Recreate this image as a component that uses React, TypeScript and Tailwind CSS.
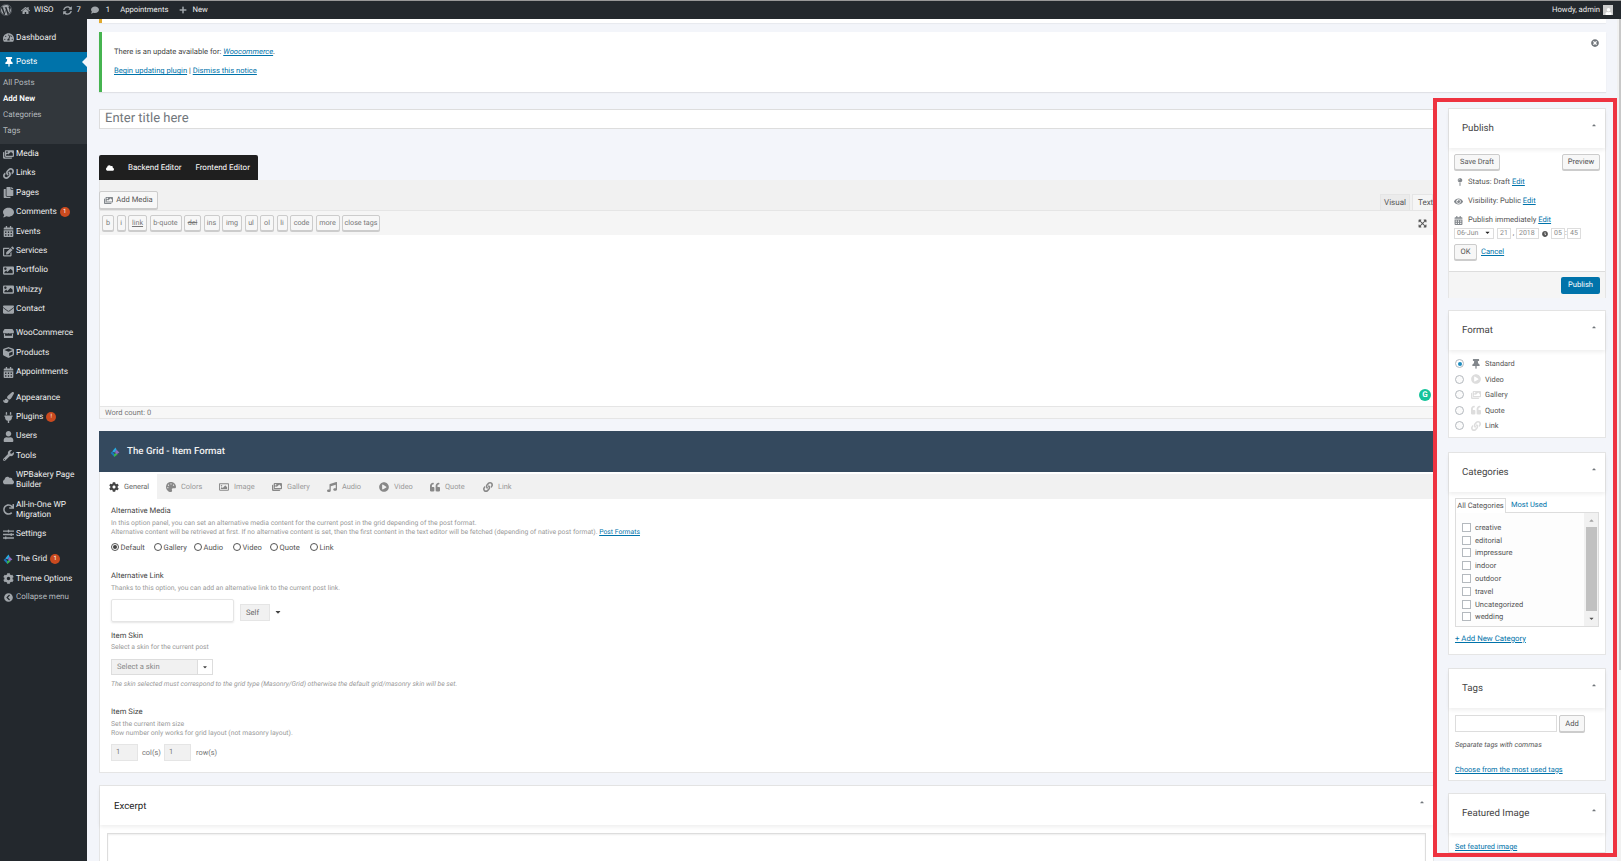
import React from 'react';
import {
  FaWordpress, FaHome, FaSyncAlt, FaComment, FaPlus, FaTachometerAlt, FaThumbtack, FaImages, FaLink, FaCopy,
  FaCalendarAlt, FaEdit, FaImage, FaEnvelope, FaCube, FaPaintBrush, FaPlug, FaUser, FaWrench, FaCloud, FaCog,
  FaRedo, FaSlidersH, FaPalette, FaMusic, FaQuoteLeft, FaPlayCircle, FaEye, FaMapPin, FaTimesCircle, FaClock, FaCaretDown,
  FaCaretUp, FaExpandArrowsAlt, FaRegImage, FaChevronCircleLeft, FaStore,
} from 'react-icons/fa';
import type { IconType } from 'react-icons';

const font = "font-['Roboto','Liberation_Sans',sans-serif] [text-rendering:geometricPrecision]";

const GridLogo = ({ className }: { className: string }) => (
  <svg viewBox="0 0 20 20" className={className}>
    <path d="M10 1 L4 8 L8 10 L12 5 Z" fill="#29abe2" />
    <path d="M4 8 L1 11 L8 18 L10 15 Z" fill="#1b75bc" />
    <path d="M8 18 L14 13 L10 11 L7 14 Z" fill="#39b54a" />
    <path d="M12 5 L9 9 L12 13 L17 10 Z" fill="#8e6bbf" />
  </svg>
);

const MenuRow = ({ icon: Icon, label, badge, h = 'h-[19.4px]', two }: { icon: IconType; label: string; badge?: string; h?: string; two?: boolean }) => (
  <div className={`flex items-center pl-[1px] ${h}`}>
    <span className="w-[15px] flex justify-center shrink-0">
      <Icon className="w-[11px] h-[11px] text-[#a0a5aa]" />
    </span>
    <span className={`text-[8.3px] text-[#eeeeee] ${two ? 'leading-[10px] w-[64px]' : 'leading-none'}`}>{label}</span>
    {badge && (
      <span className="ml-[3px] w-[10px] h-[10px] rounded-full bg-[#ca4a1f] text-white text-[6px] leading-[10px] text-center">{badge}</span>
    )}
  </div>
);

const Sidebar = () => (
  <aside className="w-[87px] shrink-0 bg-[#23282d] pt-[9px] h-full">
    <MenuRow icon={FaTachometerAlt} label="Dashboard" />
    <div className="h-[5px]" />
    <div className="relative flex items-center pl-[1px] h-[20px] bg-[#0073aa]">
      <span className="w-[15px] flex justify-center">
        <FaThumbtack className="w-[10px] h-[10px] text-white" />
      </span>
      <span className="text-[8.3px] text-white leading-none">Posts</span>
      <span className="absolute right-0 top-[5px] border-y-[5px] border-y-transparent border-r-[5px] border-r-[#f3f5fa]" />
    </div>
    <div className="bg-[#32373c] h-[72px] pt-[3px] text-[8px] text-[#b4b9be] pl-[3px]">
      <div className="h-[16px] leading-[16px]">All Posts</div>
      <div className="h-[16px] leading-[16px] font-semibold text-white">Add New</div>
      <div className="h-[16px] leading-[16px]">Categories</div>
      <div className="h-[16px] leading-[16px]">Tags</div>
    </div>
    <MenuRow icon={FaImages} label="Media" />
    <MenuRow icon={FaLink} label="Links" />
    <MenuRow icon={FaCopy} label="Pages" />
    <MenuRow icon={FaComment} label="Comments" badge="1" />
    <MenuRow icon={FaCalendarAlt} label="Events" />
    <MenuRow icon={FaEdit} label="Services" />
    <MenuRow icon={FaImage} label="Portfolio" />
    <MenuRow icon={FaImage} label="Whizzy" />
    <MenuRow icon={FaEnvelope} label="Contact" />
    <div className="h-[5px]" />
    <MenuRow icon={FaStore} label="WooCommerce" />
    <MenuRow icon={FaCube} label="Products" />
    <MenuRow icon={FaCalendarAlt} label="Appointments" />
    <div className="h-[6px]" />
    <MenuRow icon={FaPaintBrush} label="Appearance" />
    <MenuRow icon={FaPlug} label="Plugins" badge="!" />
    <MenuRow icon={FaUser} label="Users" />
    <MenuRow icon={FaWrench} label="Tools" />
    <MenuRow icon={FaCloud} label="WPBakery Page Builder" h="h-[29.5px]" two />
    <MenuRow icon={FaRedo} label="All-in-One WP Migration" h="h-[29.5px]" two />
    <MenuRow icon={FaSlidersH} label="Settings" />
    <div className="h-[5px]" />
    <div className="flex items-center pl-[1px] h-[20px]">
      <span className="w-[15px] flex justify-center"><GridLogo className="w-[11px] h-[11px]" /></span>
      <span className="text-[8.3px] text-[#eeeeee] leading-none">The Grid</span>
      <span className="ml-[3px] w-[10px] h-[10px] rounded-full bg-[#ca4a1f] text-white text-[6px] leading-[10px] text-center">1</span>
    </div>
    <MenuRow icon={FaCog} label="Theme Options" />
    <div className="flex items-center pl-[1px] h-[18px]">
      <span className="w-[15px] flex justify-center"><FaChevronCircleLeft className="w-[9px] h-[9px] text-[#a0a5aa]" /></span>
      <span className="text-[8px] text-[#b4b9be] leading-none">Collapse menu</span>
    </div>
  </aside>
);

const TopBar = () => (
  <div className="h-[19px] shrink-0 bg-[#23282d] border-t border-t-[#999999] flex items-center justify-between text-[7.7px] text-[#eeeeee] leading-none">
    <div className="flex items-center">
      <FaWordpress className="w-[12px] h-[12px] text-[#a0a5aa]" />
      <FaHome className="ml-[9px] w-[9px] h-[9px] text-[#a0a5aa]" />
      <span className="ml-[4px] text-[8px]">WISO</span>
      <FaSyncAlt className="ml-[9px] w-[9px] h-[9px] text-[#a0a5aa]" />
      <span className="ml-[5px]">7</span>
      <FaComment className="ml-[10px] w-[8px] h-[8px] text-[#a0a5aa]" />
      <span className="ml-[7px]">1</span>
      <span className="ml-[10px]">Appointments</span>
      <FaPlus className="ml-[11px] w-[8px] h-[8px] text-[#a0a5aa]" />
      <span className="ml-[5px]">New</span>
    </div>
    <div className="flex items-center pr-[8px]">
      <span>Howdy, admin</span>
      <span className="ml-[3px] w-[10px] h-[10px] bg-[#cccccc] flex items-end justify-center">
        <FaUser className="w-[7px] h-[7px] text-white" />
      </span>
    </div>
  </div>
);

const Btn = ({ children, className = '' }: { children: React.ReactNode; className?: string }) => (
  <span className={`inline-flex items-center justify-center whitespace-nowrap border border-[#cccccc] bg-[#f7f7f7] rounded-[2px] text-[#555555] shadow-[0_1px_0_#cccccc] ${className}`}>{children}</span>
);

const quicktags = [
  { t: 'b', w: 'w-[12px]' },
  { t: 'i', w: 'w-[9px]' },
  { t: 'link', w: 'w-[19px]', c: 'underline' },
  { t: 'b-quote', w: 'w-[32px]' },
  { t: 'del', w: 'w-[17px]', c: 'line-through' },
  { t: 'ins', w: 'w-[16px]' },
  { t: 'img', w: 'w-[20px]' },
  { t: 'ul', w: 'w-[13px]' },
  { t: 'ol', w: 'w-[14px]' },
  { t: 'li', w: 'w-[11px]' },
  { t: 'code', w: 'w-[23px]' },
  { t: 'more', w: 'w-[24px]' },
  { t: 'close tags', w: 'w-[38px]' },
];

const Editor = () => (
  <div className="border-x border-b border-[#e5e5e5] bg-white">
    <div className="h-[30px] bg-[#f1f1f1] flex items-end justify-between">
      <Btn className="ml-[-1px] mb-[1px] w-[59px] h-[18px] text-[7.6px]">
        <FaImages className="w-[9px] h-[9px] mr-[3px] text-[#82878c]" />Add Media
      </Btn>
      <div className="flex items-end text-[8px] text-[#555555]">
        <span className="w-[30px] h-[16px] bg-[#ebebeb] border border-[#e5e5e5] border-b-0 flex items-center justify-center mr-[2px]">Visual</span>
        <span className="w-[21px] h-[16px] bg-[#f5f5f5] border border-[#e5e5e5] border-b-0 flex items-center pl-[5px]">Text</span>
      </div>
    </div>
    <div className="h-[25px] bg-[#f5f5f5] border-t border-[#e5e5e5] flex items-center pl-[2px] gap-[2.5px] relative">
      {quicktags.map(q => (
        <Btn key={q.t} className={`h-[16px] text-[7.2px] text-[#777777] ${q.w}`}>
          <span className={q.c}>{q.t}</span>
        </Btn>
      ))}
      <FaExpandArrowsAlt className="absolute right-[6px] top-[8px] w-[9px] h-[9px] text-[#555555]" />
    </div>
    <div className="h-[171px] relative">
      <span className="absolute right-[2px] bottom-[5px] w-[12px] h-[12px] rounded-full bg-[#15c39a] text-white text-[8px] leading-[12px] text-center font-bold">G</span>
    </div>
    <div className="h-[12px] bg-[#f7f7f7] border-t border-[#e5e5e5] pl-[5px] text-[7.5px] leading-[11px] text-[#777777]">Word count: 0</div>
  </div>
);

const gridTabs: { label: string; icon: IconType; w: string; active?: boolean }[] = [
  { label: 'General', icon: FaCog, w: 'w-[57px]', active: true },
  { label: 'Colors', icon: FaPalette, w: 'w-[53px]' },
  { label: 'Image', icon: FaRegImage, w: 'w-[53px]' },
  { label: 'Gallery', icon: FaImages, w: 'w-[55px]' },
  { label: 'Audio', icon: FaMusic, w: 'w-[52px]' },
  { label: 'Video', icon: FaPlayCircle, w: 'w-[51px]' },
  { label: 'Quote', icon: FaQuoteLeft, w: 'w-[53px]' },
  { label: 'Link', icon: FaLink, w: 'w-[40px]' },
];

const RadioDot = ({ on, label, className = '' }: { on?: boolean; label: string; className?: string }) => (
  <span className={`inline-flex items-center text-[7.6px] text-[#555555] ${className}`}>
    <span className="w-[8px] h-[8px] rounded-full border border-[#555555] mr-[1.5px] flex items-center justify-center">
      {on && <span className="w-[4px] h-[4px] rounded-full bg-[#444444]" />}
    </span>
    {label}
  </span>
);

const Field = ({ children, className = '' }: { children: React.ReactNode; className?: string }) => (
  <div className={`text-[7.7px] leading-none text-[#444444] ${className}`}>{children}</div>
);

const Help = ({ children, className = '' }: { children: React.ReactNode; className?: string }) => (
  <div className={`text-[6.8px] leading-[9px] text-[#999999] ${className}`}>{children}</div>
);

const GridBox = () => (
  <div className="mt-[12px] bg-white border-x border-b border-[#e5e5e5] h-[342px]">
    <div className="h-[41px] bg-[#34495e] flex items-center pl-[11px] pt-[1px] mx-[-1px]">
      <GridLogo className="w-[11px] h-[11px]" />
      <span className="ml-[6px] text-[9.7px] font-medium text-[#f1f1f1]">The Grid - Item Format</span>
    </div>
    <div className="h-[25px] mt-[2px] bg-[#f1f1f1] flex text-[7.4px] text-[#999999]">
      {gridTabs.map(t => (
        <div key={t.label} className={`${t.w} flex items-center pl-[9px] ${t.active ? 'bg-white text-[#666666]' : ''}`}>
          <t.icon className={`w-[10px] h-[10px] mr-[5px] ${t.active ? 'text-[#444444]' : 'text-[#888888]'}`} />
          {t.label}
        </div>
      ))}
    </div>
    <div className="pl-[11px]">
      <Field className="pt-[8px]">Alternative Media</Field>
      <Help className="mt-[4px]">
        In this option panel, you can set an alternative media content for the current post in the grid depending of the post format.<br />
        Alternative content will be retrieved at first. If no alternative content is set, then the first content in the text editor will be fetched (depending of native post format). <span className="text-[#0073aa] underline">Post Formats</span>
      </Help>
      <div className="flex mt-[5px] h-[11px]">
        <RadioDot on label="Default" className="w-[43px]" />
        <RadioDot label="Gallery" className="w-[40px]" />
        <RadioDot label="Audio" className="w-[39px]" />
        <RadioDot label="Video" className="w-[37px]" />
        <RadioDot label="Quote" className="w-[40px]" />
        <RadioDot label="Link" />
      </div>
      <Field className="mt-[19px]">Alternative Link</Field>
      <Help className="mt-[5px]">Thanks to this option, you can add an alternative link to the current post link.</Help>
      <div className="flex items-center mt-[6px] h-[23px]">
        <span className="w-[123px] h-[23px] border border-[#e5e5e5] rounded-[2px] shadow-[0_1px_2px_rgba(0,0,0,0.1)]" />
        <span className="ml-[6px] w-[30px] h-[17px] mt-[3px] bg-[#f1f1f1] border border-[#e5e5e5] text-[7.6px] leading-[15px] pl-[5px] text-[#666666]">Self</span>
        <FaCaretDown className="ml-[4px] mt-[3px] w-[8px] h-[8px] text-[#444444]" />
      </div>
      <Field className="mt-[10px]">Item Skin</Field>
      <Help className="mt-[3px]">Select a skin for the current post</Help>
      <div className="flex w-[102px] h-[16px] mt-[7px] border border-[#dddddd] text-[7.6px] leading-[14px] text-[#888888]">
        <span className="flex-1 bg-[#f1f1f1] pl-[5px]">Select a skin</span>
        <span className="w-[15px] bg-white flex items-center justify-center border-l border-[#dddddd]"><FaCaretDown className="w-[6px] h-[6px] text-[#444444]" /></span>
      </div>
      <Help className="mt-[5px] italic">The skin selected must correspond to the grid type (Masonry/Grid) otherwise the default grid/masonry skin will be set.</Help>
      <Field className="mt-[19px]">Item Size</Field>
      <Help className="mt-[4px]">Set the current item size<br />Row number only works for grid layout (not masonry layout).</Help>
      <div className="flex items-center mt-[6px] text-[7.4px] text-[#777777]">
        <span className="w-[27px] h-[17px] bg-[#f1f1f1] border border-[#e5e5e5] pl-[4px] leading-[14px]">1</span>
        <span className="ml-[4px] w-[22px]">col(s)</span>
        <span className="w-[27px] h-[17px] bg-[#f1f1f1] border border-[#e5e5e5] pl-[4px] leading-[14px]">1</span>
        <span className="ml-[5px]">row(s)</span>
      </div>
    </div>
  </div>
);

const Postbox = ({ title, children, className = '' }: { title: string; children: React.ReactNode; className?: string }) => (
  <div className={`bg-white border border-[#e5e5e5] ${className}`}>
    <div className="h-[39px] flex items-center justify-between pl-[13px] pr-[8px] pt-[2px] shadow-[0_2px_4px_rgba(0,0,0,0.07)]">
      <span className="text-[9.7px] text-[#444444]">{title}</span>
      <FaCaretUp className="w-[6px] h-[6px] text-[#72777c] mb-[10px]" />
    </div>
    {children}
  </div>
);

const A = ({ children, className = '' }: { children: React.ReactNode; className?: string }) => (
  <span className={`text-[#0073aa] underline ${className}`}>{children}</span>
);

const Small = ({ children, className = '' }: { children: React.ReactNode; className?: string }) => (
  <span className={`h-[11px] bg-white border border-[#dddddd] text-[#888888] text-[7px] leading-[9px] pl-[2px] ${className}`}>{children}</span>
);

const PublishBox = () => (
  <Postbox title="Publish" className="h-[190px]">
    <div className="h-[123px] px-[5px] pt-[6px] text-[7.6px] text-[#555555] relative">
      <div className="flex justify-between">
        <Btn className="w-[46px] h-[16px] text-[7.4px]">Save Draft</Btn>
        <Btn className="w-[38px] h-[16px] text-[7.6px]">Preview</Btn>
      </div>
      <div className="flex items-center h-[12px] mt-[6px]">
        <FaMapPin className="w-[8px] h-[8px] ml-[2px] mr-[4px] text-[#82878c]" />Status: Draft&nbsp;<A>Edit</A>
      </div>
      <div className="flex items-center h-[12px] mt-[7px]">
        <FaEye className="w-[9px] h-[9px] mr-[5px] text-[#82878c]" />Visibility: Public&nbsp;<A>Edit</A>
      </div>
      <div className="flex items-center h-[12px] mt-[7px]">
        <FaCalendarAlt className="w-[9px] h-[9px] mr-[5px] text-[#82878c]" />Publish immediately&nbsp;<A>Edit</A>
      </div>
      <div className="flex items-center mt-[2px]">
        <Small className="w-[40px] flex justify-between pr-[2px]">06-Jun<FaCaretDown className="w-[7px] h-[7px] text-[#222222]" /></Small>
        <Small className="ml-[3px] w-[14px]">21</Small>
        <span className="w-[5px] text-center text-[7px]">,</span>
        <Small className="w-[23px]">2018</Small>
        <FaClock className="mx-[3px] w-[6px] h-[6px]" />
        <Small className="w-[14px]">05</Small>
        <span className="w-[2px] text-[7px]">:</span>
        <Small className="w-[14px]">45</Small>
      </div>
      <div className="flex items-center mt-[5px]">
        <Btn className="w-[23px] h-[16px] text-[7.6px]">OK</Btn>
        <A className="ml-[4px]">Cancel</A>
      </div>
    </div>
    <div className="h-[27px] bg-[#f5f5f5] border-t border-[#dddddd] flex items-center justify-end pr-[5px]">
      <span className="w-[39px] h-[17px] bg-[#0073aa] rounded-[2px] text-white text-[7.6px] flex items-center justify-center">Publish</span>
    </div>
  </Postbox>
);

const formats: { label: string; icon: IconType; on?: boolean }[] = [
  { label: 'Standard', icon: FaThumbtack, on: true },
  { label: 'Video', icon: FaPlayCircle },
  { label: 'Gallery', icon: FaImages },
  { label: 'Quote', icon: FaQuoteLeft },
  { label: 'Link', icon: FaLink },
];

const FormatBox = () => (
  <Postbox title="Format" className="mt-[12px] h-[128px]">
    <div className="pl-[6px] pt-[6px]">
      {formats.map(f => (
        <div key={f.label} className="flex items-center h-[15.5px] text-[7.4px] text-[#555555]">
          <span className={`w-[9px] h-[9px] rounded-full border border-[#b4b9be] flex items-center justify-center ${f.on ? '' : 'bg-[#fbfbfb]'}`}>
            {f.on && <span className="w-[4px] h-[4px] rounded-full bg-[#1e8cbe]" />}
          </span>
          <f.icon className={`ml-[7px] mr-[4px] w-[10px] h-[10px] ${f.on ? 'text-[#82878c]' : 'text-[#dddddd]'}`} />
          {f.label}
        </div>
      ))}
    </div>
  </Postbox>
);

const cats = ['creative', 'editorial', 'impressure', 'indoor', 'outdoor', 'travel', 'Uncategorized', 'wedding'];

const CategoriesBox = () => (
  <Postbox title="Categories" className="mt-[14px] h-[203px]">
    <div className="pl-[6px] pr-[6px] pt-[5px] text-[7.5px]">
      <div className="flex h-[15px]">
        <span className="w-[51px] whitespace-nowrap border border-[#dddddd] border-b-0 bg-white text-[#555555] flex items-center justify-center relative top-[1px] z-10">All Categories</span>
        <span className="ml-[5px] text-[#0073aa] leading-[15px]">Most Used</span>
      </div>
      <div className="h-[115px] border border-[#dddddd] bg-[#fdfdfd] flex">
        <div className="flex-1 pl-[6px] pt-[8px] text-[#555555]">
          {cats.map(c => (
            <div key={c} className="flex items-center h-[12.8px]">
              <span className="w-[9px] h-[9px] border border-[#b4b9be] bg-white mr-[4px]" />
              {c}
            </div>
          ))}
        </div>
        <div className="w-[14px] bg-[#f1f1f1] flex flex-col items-center">
          <FaCaretUp className="w-[7px] h-[7px] text-[#a3a3a3] mt-[4px]" />
          <span className="w-[11px] h-[84px] bg-[#c1c1c1] mt-[3px]" />
          <FaCaretDown className="w-[7px] h-[7px] text-[#505050] mt-[4px]" />
        </div>
      </div>
      <A className="block mt-[6px] text-[7.8px]">+ Add New Category</A>
    </div>
  </Postbox>
);

const TagsBox = () => (
  <Postbox title="Tags" className="mt-[13px] h-[113px]">
    <div className="pl-[6px] pt-[7px] text-[7.4px] text-[#555555]">
      <div className="flex">
        <span className="w-[102px] h-[17px] border border-[#dddddd] bg-white" />
        <Btn className="ml-[2px] w-[26px] h-[17px] text-[7.6px]">Add</Btn>
      </div>
      <div className="italic text-[7.2px] mt-[8px]">Separate tags with commas</div>
      <A className="block mt-[13px]">Choose from the most used tags</A>
    </div>
  </Postbox>
);

const FeaturedBox = () => (
  <Postbox title="Featured Image" className="mt-[12px]">
    <A className="block pl-[6px] pt-[8px] text-[7.4px]">Set featured image</A>
  </Postbox>
);

export default function App() {
  return (
    <div className={`relative h-[861px] w-full overflow-hidden flex flex-col bg-[#f3f5fa] ${font}`}>
      <TopBar />
      <div className="flex flex-1 min-h-0">
        <Sidebar />
        <main className="flex-1 min-w-0 pl-[12px] pr-[11px]">
          <div className="h-[4px] bg-white border-l-[3px] border-l-[#e0a92f] shadow-[0_1px_1px_rgba(0,0,0,0.05)]" />
          <div className="mt-[9px] h-[60px] bg-white border-l-[3px] border-l-[#46b450] shadow-[0_1px_1px_rgba(0,0,0,0.08)] relative pl-[12px] pt-[14px] text-[7.6px] text-[#444444]">
            <div>There is an update available for: <A className="italic">Woocommerce</A>.</div>
            <div className="mt-[8px]"><A>Begin updating plugin</A> | <A>Dismiss this notice</A></div>
            <FaTimesCircle className="absolute right-[7px] top-[7px] w-[8px] h-[8px] text-[#72777c]" />
          </div>
          <div className="flex gap-[14px]">
            <div className="flex-1 min-w-0 pt-[17px]">
              <div className="h-[20px] bg-white border border-[#dddddd] pl-[5px] text-[13px] leading-[18px] text-[#72777c]">Enter title here</div>
              <div className="mt-[26px] w-[159px] h-[25px] bg-[#1f1f1f] rounded-t-[2px] flex items-center whitespace-nowrap text-[8px] text-white">
                <FaCloud className="ml-[7px] w-[8px] h-[8px]" />
                <span className="ml-[14px]">Backend Editor</span>
                <span className="ml-[14px]">Frontend Editor</span>
              </div>
              <Editor />
              <GridBox />
              <div className="mt-[12px] bg-white border border-[#e5e5e5] h-[200px]">
                <div className="h-[39px] flex items-center justify-between pl-[14px] pr-[8px] pt-[3px] shadow-[0_2px_4px_rgba(0,0,0,0.07)]">
                  <span className="text-[9.7px] text-[#222222]">Excerpt</span>
                  <FaCaretUp className="w-[6px] h-[6px] text-[#72777c] mb-[10px]" />
                </div>
                <div className="mx-[7px] mt-[8px] h-[100px] border border-[#dddddd] shadow-[inset_0_1px_2px_rgba(0,0,0,0.07)]" />
              </div>
            </div>
            <div className="w-[158px] shrink-0 pt-[16px]">
              <PublishBox />
              <FormatBox />
              <CategoriesBox />
              <TagsBox />
              <FeaturedBox />
            </div>
          </div>
        </main>
        <div className="w-[4px] shrink-0 bg-[#f1f1f1]">
          <div className="ml-[2px] w-[2px] h-[651px] bg-[#c8c8c8]" />
        </div>
      </div>
      <div className="absolute left-[1433px] top-[98px] w-[184px] h-[759px] border-[4px] border-[#ee3340] pointer-events-none" />
    </div>
  );
}
